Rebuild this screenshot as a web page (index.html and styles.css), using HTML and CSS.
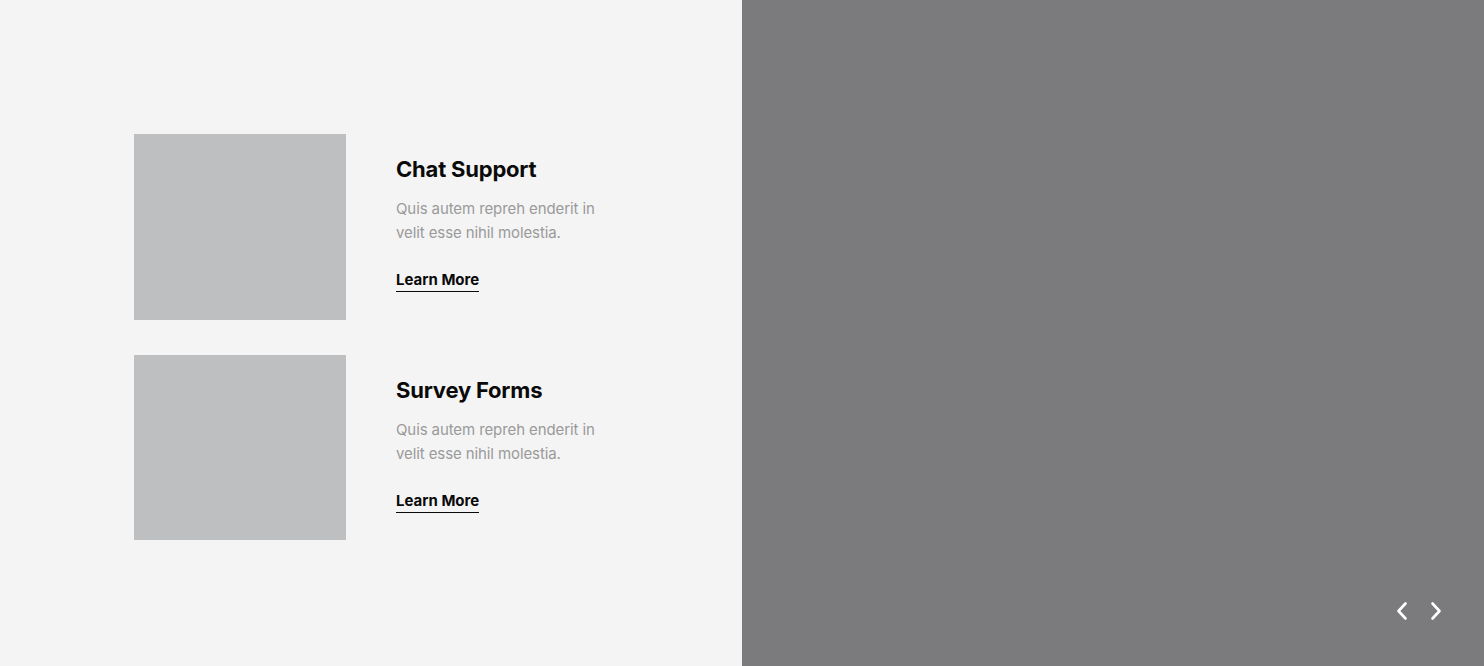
FILE: index.html
```html
<!DOCTYPE html>
<html>
<head>
<meta charset="utf-8">
<link rel="stylesheet" href="styles.css">
</head>
<body>
<div class="page">
  <section class="left">
    <div class="list">
      <div class="item">
        <div class="thumb"></div>
        <div class="info">
          <h3 class="title">Chat Support</h3>
          <p class="desc">Quis autem repreh enderit in velit esse nihil molestia.</p>
          <a class="more" href="#">Learn More</a>
        </div>
      </div>
      <div class="item">
        <div class="thumb"></div>
        <div class="info">
          <h3 class="title">Survey Forms</h3>
          <p class="desc">Quis autem repreh enderit in velit esse nihil molestia.</p>
          <a class="more" href="#">Learn More</a>
        </div>
      </div>
    </div>
  </section>
  <section class="right">
    <div class="nav">
      <svg class="arrow" width="14" height="20" viewBox="0 0 14 20"><path d="M10.5 2.5 L3.5 10 L10.5 17.5" fill="none" stroke="#fff" stroke-width="2.6" stroke-linecap="round" stroke-linejoin="round"/></svg>
      <svg class="arrow" width="14" height="20" viewBox="0 0 14 20"><path d="M3.5 2.5 L10.5 10 L3.5 17.5" fill="none" stroke="#fff" stroke-width="2.6" stroke-linecap="round" stroke-linejoin="round"/></svg>
    </div>
  </section>
</div>
</body>
</html>
```
FILE: styles.css
```css
* { box-sizing: border-box; }
html, body { margin: 0; padding: 0; }
body { font-family: Inter, "Noto Sans", sans-serif; }
.page { display: flex; width: 1484px; height: 666px; overflow: hidden; }
.left { width: 742px; background: #f4f4f4; padding: 134px 0 0 134px; }
.list { display: flex; flex-direction: column; gap: 35px; }
.item { display: flex; gap: 50px; }
.thumb { width: 212px; height: 185.5px; background: #bebfc1; flex: none; }
.info { padding-top: 20px; width: 220px; }
.title { margin: 0; font-size: 22px; line-height: 30px; font-weight: 700; color: #0a0a0a; letter-spacing: -0.2px; }
.desc { margin: 13px 0 0; font-size: 15px; line-height: 24px; color: #9a9a9a; letter-spacing: -0.1px; }
.more { display: inline-block; margin-top: 25px; font-size: 15px; line-height: 20px; font-weight: 700; color: #0a0a0a; text-decoration: none; border-bottom: 1.5px solid #0a0a0a; padding-bottom: 1px; letter-spacing: 0px; }
.right { width: 742px; background: #7b7b7d; display: flex; align-items: flex-end; justify-content: flex-end; padding: 0 41px 45px 0; }
.nav { display: flex; gap: 20px; }
.arrow { display: block; }
```
